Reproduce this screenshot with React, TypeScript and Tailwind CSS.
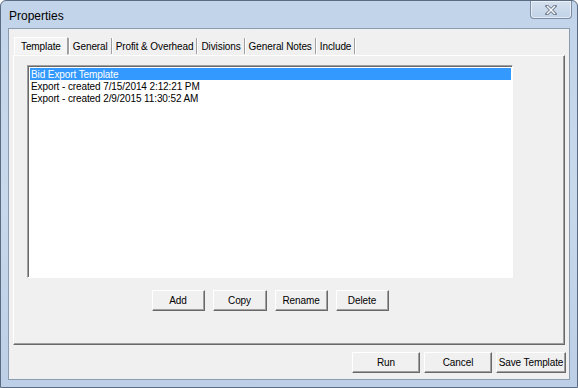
const font = { fontFamily: '"Liberation Sans", Arial, sans-serif' };

const tabs = ["Template", "General", "Profit & Overhead", "Divisions", "General Notes", "Include"];

const items = [
  "Bid Export Template",
  "Export - created 7/15/2014 2:12:21 PM",
  "Export - created 2/9/2015 11:30:52 AM",
];

function Btn({ label, w }: { label: string; w: string }) {
  return (
    <button
      className={`${w} h-[21px] bg-[#f0f0f0] text-[10px] tracking-[-0.1px] whitespace-nowrap text-black border border-t-white border-l-white border-r-[#696969] border-b-[#696969] shadow-[inset_-1px_-1px_0_#a0a0a0] flex items-center justify-center`}
    >
      {label}
    </button>
  );
}

export default function App() {
  return (
    <div
      className="w-[578px] h-[388px] flex flex-col bg-gradient-to-b from-[#c2d4ea] via-[#c9d9ec] to-[#bccfe6] border border-[#5b6c82] rounded-t-[6px] overflow-hidden"
      style={font}
    >
      {/* Title bar */}
      <div className="h-[27px] flex items-start justify-between shrink-0">
        <span className="pl-[8px] pt-[6px] text-[12px] text-black">Properties</span>
        <div className="mr-[5px] w-[42px] h-[18px] rounded-b-[4px] border border-t-0 border-[#7d8da3] bg-gradient-to-b from-[#d4e0ee] to-[#c2d3e8] shadow-[inset_0_0_0_1px_rgba(255,255,255,0.55)] flex items-center justify-center">
          <svg width="12" height="10" viewBox="0 0 12 10">
            <path d="M2 1 L10 9 M10 1 L2 9" stroke="#6b7888" strokeWidth="3.2" strokeLinecap="square" />
            <path d="M2 1 L10 9 M10 1 L2 9" stroke="#f4f7fb" strokeWidth="1.6" />
          </svg>
        </div>
      </div>

      {/* Client area */}
      <div className="flex-1 mx-[7px] mb-[7px] bg-[#f0f0f0] border border-[#8b9bb0] flex flex-col">
        {/* Tabs */}
        <div className="h-[26px] flex items-end pl-[5px]">
          <div className="flex items-center h-[18px] text-[10px] tracking-[-0.1px] text-black">
            {tabs.map((t, i) => (
              <div key={t} className="flex items-center h-full">
                <div
                  className={
                    i === 0
                      ? "h-full px-[6px] flex items-center bg-[#f4f4f4] border border-t-white border-l-white border-r-[#a0a0a0] border-b-[#f0f0f0]"
                      : "h-full px-[3px] flex items-center"
                  }
                >
                  {t}
                </div>
                <div className="h-[16px] w-[2px] border-l border-l-[#a0a0a0] border-r border-r-white" />
              </div>
            ))}
          </div>
        </div>

        {/* Tab page */}
        <div className="mx-[4px] h-[290px] border border-t-white border-l-white border-r-[#696969] border-b-[#696969] shadow-[inset_-1px_-1px_0_#a0a0a0] flex flex-col pl-[13px] pt-[9px]">
          <div className="w-[486px] flex flex-col">
            <div className="h-[213px] bg-white border border-t-[#a0a0a0] border-l-[#a0a0a0] border-r-white border-b-white shadow-[inset_1px_1px_0_#696969] pt-[2px] pl-[2px] pr-[1px]">
              {items.map((it, i) => (
                <div
                  key={it}
                  className={`h-[12px] leading-[13px] text-[10px] tracking-[-0.1px] pl-[1px] ${i === 0 ? "bg-[#3399ff] text-white" : "text-black"}`}
                >
                  {it}
                </div>
              ))}
            </div>
            <div className="mt-[12px] flex justify-center gap-[8px]">
              <Btn label="Add" w="w-[53px]" />
              <Btn label="Copy" w="w-[54px]" />
              <Btn label="Rename" w="w-[53px]" />
              <Btn label="Delete" w="w-[53px]" />
            </div>
          </div>
        </div>

        {/* Bottom buttons */}
        <div className="flex justify-end gap-[4px] pt-[7px] pr-[3px]">
          <Btn label="Run" w="w-[68px]" />
          <Btn label="Cancel" w="w-[68px]" />
          <Btn label="Save Template" w="w-[70px]" />
        </div>
      </div>
    </div>
  );
}
